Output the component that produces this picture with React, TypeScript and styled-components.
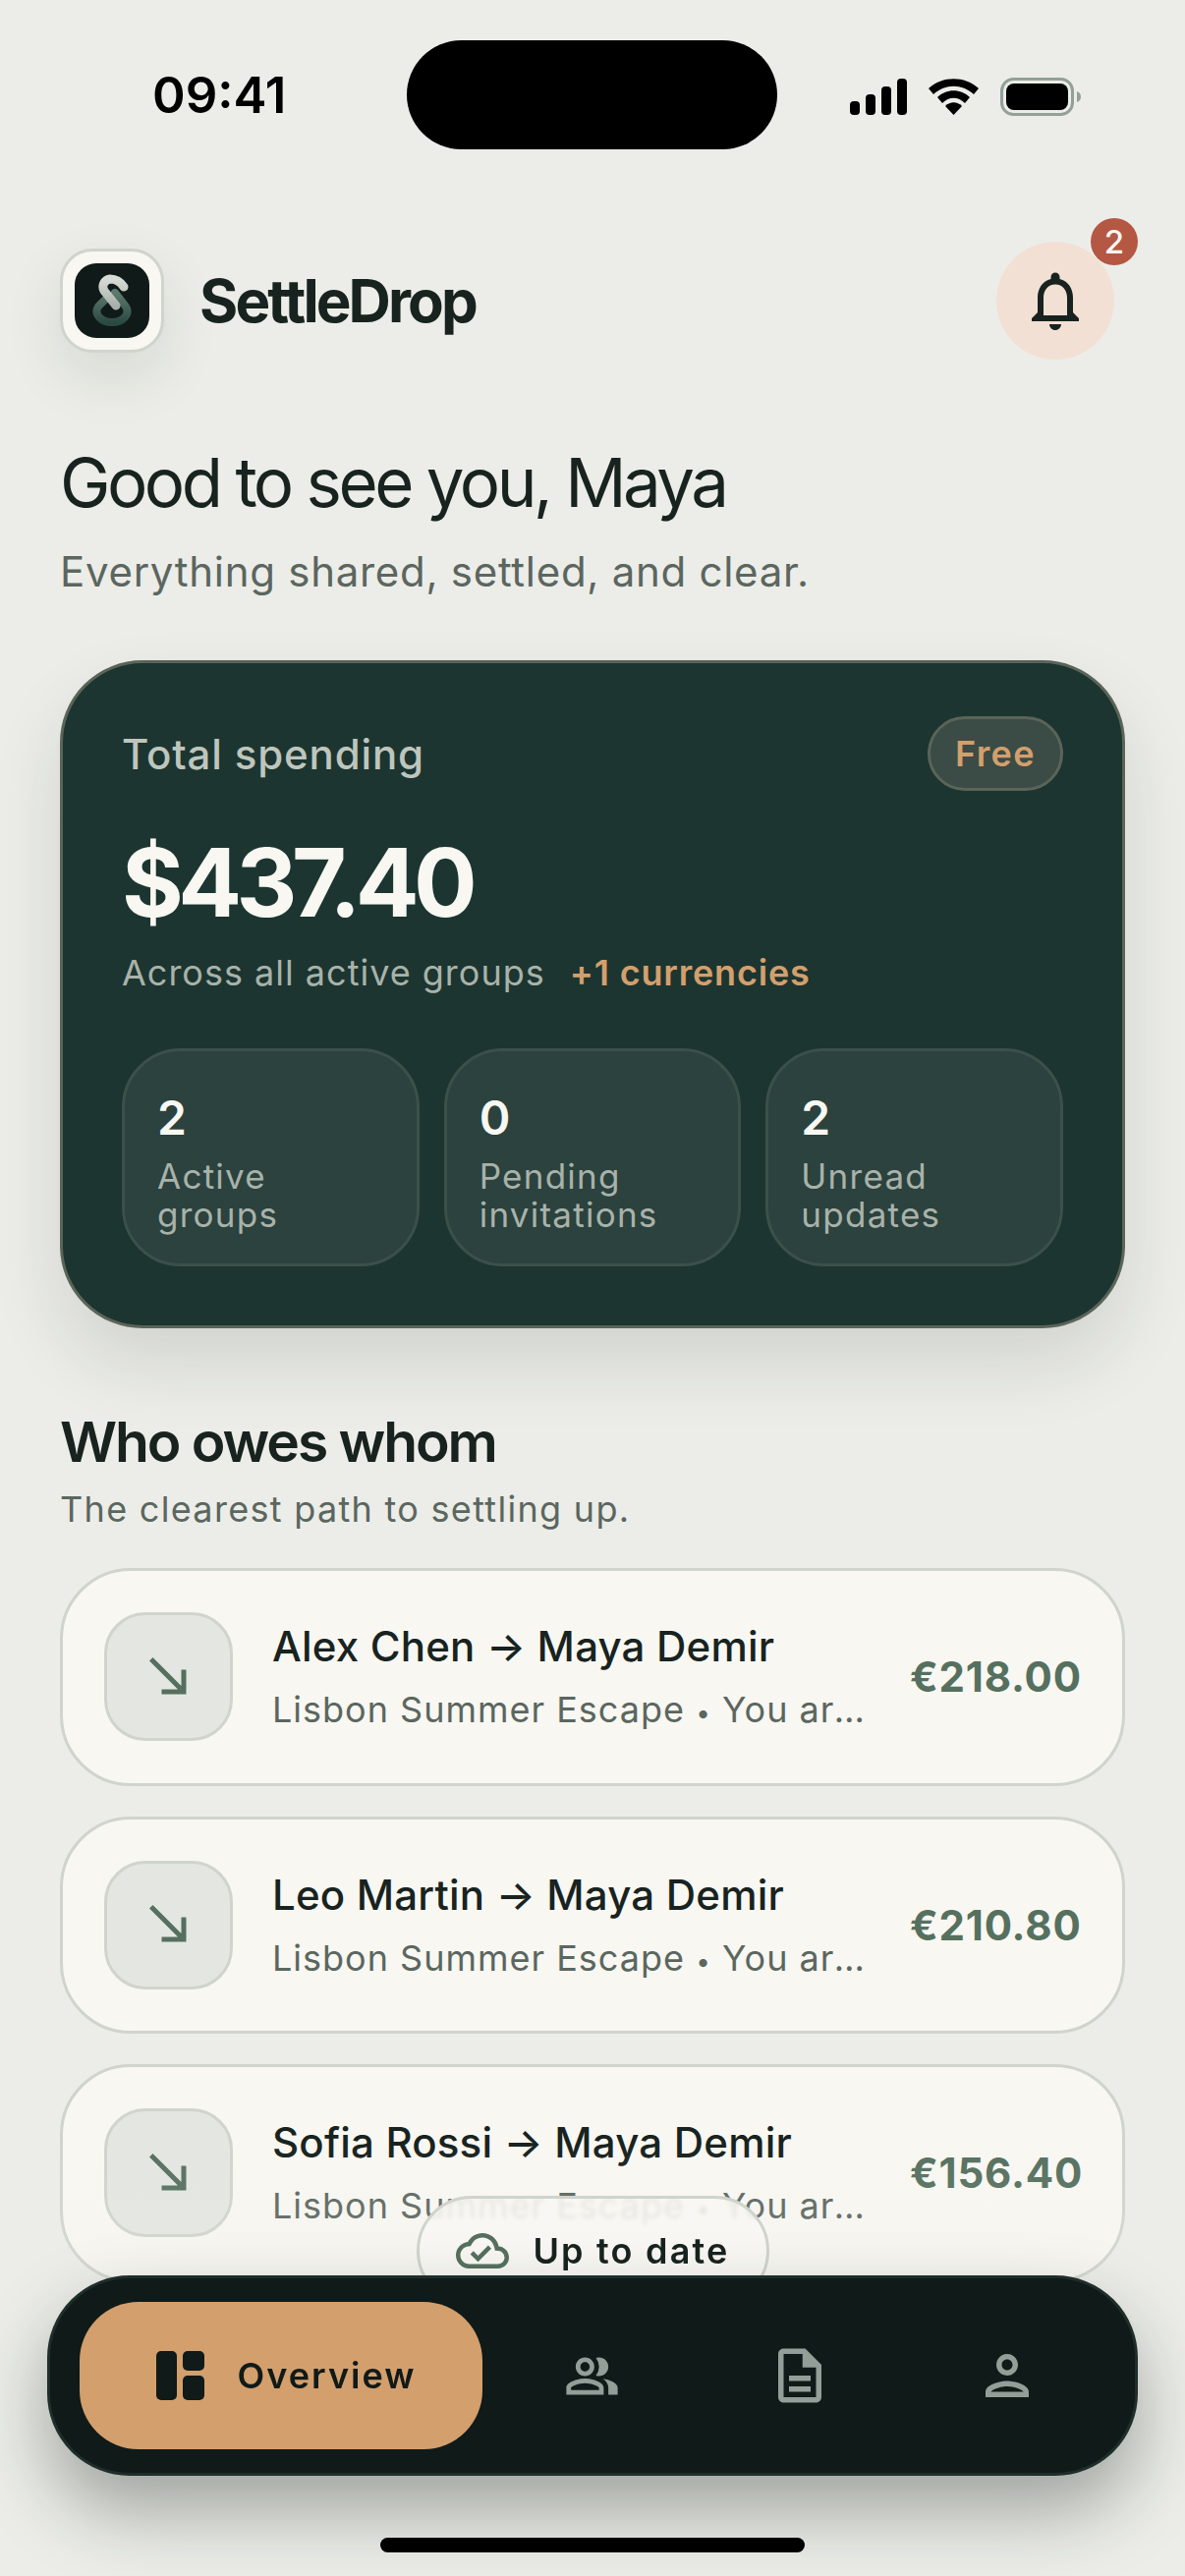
import React from 'react';
import styled, { createGlobalStyle } from 'styled-components';
import { MdOutlineNotifications, MdSouthEast, MdOutlineCloudDone, MdOutlinePeopleAlt, MdOutlineDescription, MdOutlinePerson } from 'react-icons/md';

const GlobalStyle = createGlobalStyle`
  html, body { margin: 0; padding: 0; background: #ecede8; }
  * { box-sizing: border-box; }
  body { font-family: Inter, "Liberation Sans", sans-serif; color: #18231f; }
`;

const Page = styled.div`
  position: relative;
  width: 1206px;
  height: 2622px;
  overflow: hidden;
  background: #ecede8;
`;

const StatusBar = styled.div`
  display: flex;
  align-items: flex-start;
  padding: 41px 106px 0 155px;
  height: 246px;
`;

const Time = styled.div`
  width: 259px;
  height: 111px;
  display: flex;
  align-items: center;
  font-size: 51px;
  font-weight: 600;
  color: #000;
`;

const Island = styled.div`
  width: 377px;
  height: 111px;
  border-radius: 56px;
  background: #000;
`;

const StatusIcons = styled.div`
  margin-left: auto;
  display: flex;
  align-items: center;
  gap: 22px;
  height: 40px;
  margin-top: 37px;
`;

const Header = styled.header`
  display: flex;
  align-items: center;
  height: 120px;
  padding: 0 72px 0 61px;
`;

const LogoBox = styled.div`
  width: 106px;
  height: 106px;
  border-radius: 33px;
  background: #f8f7f2;
  border: 3px solid #cfd4cc;
  display: flex;
  align-items: center;
  justify-content: center;
  box-shadow: 0 24px 60px rgba(24, 35, 31, 0.1);
`;

const Brand = styled.div`
  margin-left: 36px;
  font-size: 60px;
  font-weight: 700;
  letter-spacing: -2.9px;
  color: #18231f;
`;

const BellButton = styled.div`
  position: relative;
  margin-left: auto;
  width: 120px;
  height: 120px;
  border-radius: 50%;
  background: #f3e0d4;
  display: flex;
  align-items: center;
  justify-content: center;
  color: #18231f;
`;

const Badge = styled.div`
  position: absolute;
  top: -24px;
  right: -24px;
  width: 48px;
  height: 48px;
  border-radius: 50%;
  background: #b45743;
  color: #f8f7f2;
  font-size: 33px;
  font-weight: 500;
  display: flex;
  align-items: center;
  justify-content: center;
`;

const Main = styled.main`
  padding: 0 61px;
`;

const Greeting = styled.h1`
  margin: 83px 0 0;
  font-size: 69px;
  line-height: 84px;
  font-weight: 400;
  letter-spacing: -3.5px;
  color: #18231f;
`;

const Lead = styled.p`
  margin: 22px 0 0;
  font-size: 42px;
  line-height: 54px;
  font-weight: 400;
  letter-spacing: 0.72px;
  color: #5b665f;
`;

const SpendCard = styled.section`
  margin-top: 63px;
  height: 680px;
  border-radius: 84px;
  background: #1c3530;
  border: 3px solid #5a6458;
  padding: 54px 60px;
  box-shadow: 0 36px 72px rgba(24, 35, 31, 0.12);
`;

const CardTop = styled.div`
  display: flex;
  align-items: center;
  justify-content: space-between;
  height: 76px;
`;

const CardLabel = styled.div`
  font-size: 42px;
  font-weight: 500;
  letter-spacing: 0.85px;
  color: #bfc5bd;
`;

const PlanPill = styled.div`
  width: 138px;
  height: 76px;
  border-radius: 38px;
  background: #3a4c45;
  border: 3px solid #5a6458;
  display: flex;
  align-items: center;
  justify-content: center;
  font-size: 36px;
  font-weight: 600;
  letter-spacing: 1.4px;
  color: #d39f6d;
`;

const Total = styled.div`
  margin-top: 35px;
  font-size: 96px;
  line-height: 116px;
  font-weight: 700;
  letter-spacing: -5.6px;
  color: #f8f7f2;
`;

const CardNote = styled.div`
  margin-top: 10px;
  display: flex;
  gap: 25px;
  font-size: 36px;
  line-height: 48px;
  letter-spacing: 1px;
  color: #a9b2aa;
`;

const Accent = styled.span`
  font-weight: 600;
  letter-spacing: 0.8px;
  color: #d39f6d;
`;

const StatGrid = styled.div`
  margin-top: 53px;
  display: grid;
  grid-template-columns: repeat(3, 1fr);
  gap: 25px;
`;

const Stat = styled.div`
  height: 222px;
  border-radius: 60px;
  background: #2b423e;
  border: 3px solid #3c504a;
  padding: 38px 33px 0;
`;

const StatValue = styled.div`
  font-size: 48px;
  line-height: 60px;
  font-weight: 600;
  color: #f8f7f2;
`;

const StatLabel = styled.div`
  margin-top: 10px;
  font-size: 35px;
  line-height: 39px;
  letter-spacing: 1.25px;
  color: #a9b2aa;
`;

const SectionTitle = styled.h2`
  margin: 78px 0 0;
  font-size: 57px;
  line-height: 76px;
  font-weight: 600;
  letter-spacing: -2.1px;
  color: #18231f;
`;

const SectionNote = styled.p`
  margin: 8px 0 0;
  font-size: 36px;
  line-height: 44px;
  letter-spacing: 1.3px;
  color: #5b665f;
`;

const RowList = styled.div`
  margin-top: 38px;
  display: flex;
  flex-direction: column;
  gap: 31px;
`;

const Row = styled.div`
  display: flex;
  align-items: center;
  height: 221.5px;
  padding: 0 42px;
  border-radius: 72px;
  background: #f8f7f2;
  border: 3px solid #cfd4cc;
`;

const RowIcon = styled.div`
  flex: none;
  width: 131px;
  height: 131px;
  border-radius: 42px;
  background: #e4e7e1;
  border: 3px solid #cfd4cc;
  display: flex;
  align-items: center;
  justify-content: center;
  color: #56705f;
`;

const RowBody = styled.div`
  flex: 1;
  min-width: 0;
  margin: 0 44px 0 40px;
  padding-top: 3px;
`;

const RowTitle = styled.div`
  font-size: 42px;
  line-height: 56px;
  font-weight: 500;
  letter-spacing: 0.2px;
  color: #18231f;
`;

const RowMeta = styled.div`
  margin-top: 12px;
  font-size: 36px;
  line-height: 48px;
  letter-spacing: 1px;
  color: #5b665f;
  white-space: nowrap;
  overflow: hidden;
  text-overflow: ellipsis;
`;

const Dot = styled.span`
  font-size: 26px;
`;

const Amount = styled.div`
  flex: none;
  width: 174px;
  text-align: right;
  white-space: nowrap;
  font-size: 42px;
  font-weight: 700;
  letter-spacing: 0.8px;
  color: #56705f;
`;

const BottomFade = styled.div`
  position: absolute;
  left: 0;
  right: 0;
  top: 2180px;
  height: 160px;
  background: linear-gradient(rgba(236, 237, 232, 0), rgba(236, 237, 232, 0.2));
`;

const SyncPill = styled.div`
  position: absolute;
  top: 2235px;
  left: 424px;
  width: 359px;
  height: 112px;
  border-radius: 56px;
  border: 3px solid #cfd4cc;
  background: rgba(248, 247, 242, 0.88);
  backdrop-filter: blur(2px);
  display: flex;
  align-items: center;
  justify-content: center;
  gap: 24px;
  font-size: 36px;
  font-weight: 600;
  letter-spacing: 2.2px;
  color: #18231f;
`;

const SyncIcon = styled.span`
  display: flex;
  color: #56705f;
`;

const TabBar = styled.nav`
  position: absolute;
  left: 48px;
  top: 2316px;
  width: 1110px;
  height: 204px;
  border-radius: 84px;
  background: #101a18;
  border: 3px solid #1e2e2a;
  padding: 24px 30px;
  display: flex;
  align-items: center;
  box-shadow: 0 36px 72px rgba(24, 35, 31, 0.36);
`;

const ActiveTab = styled.div`
  flex: none;
  width: 410px;
  height: 150px;
  border-radius: 60px;
  padding-left: 10px;
  background: #d39f6d;
  display: flex;
  align-items: center;
  justify-content: center;
  gap: 33px;
  font-size: 36px;
  font-weight: 600;
  letter-spacing: 2px;
  color: #101a18;
`;

const Tab = styled.div`
  flex: 1;
  padding-left: 12px;
  display: flex;
  align-items: center;
  justify-content: center;
  color: #929e97;
`;

const HomeBar = styled.div`
  position: absolute;
  left: 387px;
  top: 2583px;
  width: 432px;
  height: 15px;
  border-radius: 8px;
  background: #000;
`;

const debts = [
  { from: 'Alex Chen', amount: '€218.00' },
  { from: 'Leo Martin', amount: '€210.80' },
  { from: 'Sofia Rossi', amount: '€156.40' },
];

const stats = [
  { value: '2', label: ['Active', 'groups'] },
  { value: '0', label: ['Pending', 'invitations'] },
  { value: '2', label: ['Unread', 'updates'] },
];

function SignalIcon() {
  return (
    <svg width="58" height="37" viewBox="0 0 58 37">
      <rect x="0" y="23" width="10" height="14" rx="4" fill="#000" />
      <rect x="16" y="16" width="10" height="21" rx="4" fill="#000" />
      <rect x="32" y="8" width="10" height="29" rx="4" fill="#000" />
      <rect x="48" y="0" width="10" height="37" rx="4" fill="#000" />
    </svg>
  );
}

function WifiIcon() {
  return (
    <svg width="51" height="37" viewBox="0 0 51 37">
      <path d="M0 10 C14 -3 37 -3 51 10 L46 16 C34 5 17 5 5 16Z" fill="#000" />
      <path d="M9 19 C18 10 33 10 42 19 L37 25 C30 18 21 18 14 25Z" fill="#000" />
      <path d="M17 28 C22 23 29 23 34 28 L25.5 37Z" fill="#000" />
    </svg>
  );
}

function BatteryIcon() {
  return (
    <svg width="82" height="39" viewBox="0 0 82 39">
      <rect x="1.5" y="1.5" width="72" height="36" rx="12" fill="none" stroke="#93a097" strokeWidth="3" />
      <rect x="6" y="6" width="63" height="27" rx="8" fill="#000" />
      <path d="M78 14 C81 15 82 17 82 19.5 C82 22 81 24 78 25Z" fill="#93a097" />
    </svg>
  );
}

function LogoMark() {
  return (
    <svg width="76" height="76" viewBox="0 0 76 76">
      <defs>
        <linearGradient id="linkTop" x1="0" y1="0" x2="0" y2="1">
          <stop offset="0" stopColor="#d8dcd6" />
          <stop offset="1" stopColor="#a9b0aa" />
        </linearGradient>
        <linearGradient id="linkBottom" x1="0" y1="0" x2="0" y2="1">
          <stop offset="0" stopColor="#5d7a70" />
          <stop offset="1" stopColor="#2b4a42" />
        </linearGradient>
      </defs>
      <rect width="76" height="76" rx="22" fill="#101a18" />
      <path d="M41 30 L52 44 C57 52 49 60 38 60 C27 60 19 52 24 44 L31 37" fill="none" stroke="url(#linkBottom)" strokeWidth="8" strokeLinecap="round" />
      <path d="M50 24 C46 18 41 16 36 16 C30 17 27 23 30 28 L42 43" fill="none" stroke="url(#linkTop)" strokeWidth="9" strokeLinecap="round" />
    </svg>
  );
}

function DashboardIcon() {
  return (
    <svg width="50" height="50" viewBox="0 0 50 50">
      <rect x="0" y="0" width="21" height="50" rx="5" fill="#101a18" />
      <rect x="27" y="0" width="22" height="20" rx="5" fill="#101a18" />
      <rect x="27" y="25" width="22" height="25" rx="5" fill="#101a18" />
    </svg>
  );
}

export default function App() {
  return (
    <Page>
      <GlobalStyle />
      <StatusBar>
        <Time>09:41</Time>
        <Island />
        <StatusIcons>
          <SignalIcon />
          <WifiIcon />
          <BatteryIcon />
        </StatusIcons>
      </StatusBar>

      <Header>
        <LogoBox>
          <LogoMark />
        </LogoBox>
        <Brand>SettleDrop</Brand>
        <BellButton>
          <MdOutlineNotifications size={72} />
          <Badge>2</Badge>
        </BellButton>
      </Header>

      <Main>
        <Greeting>Good to see you, Maya</Greeting>
        <Lead>Everything shared, settled, and clear.</Lead>

        <SpendCard>
          <CardTop>
            <CardLabel>Total spending</CardLabel>
            <PlanPill>Free</PlanPill>
          </CardTop>
          <Total>$437.40</Total>
          <CardNote>
            <span>Across all active groups</span>
            <Accent>+1 currencies</Accent>
          </CardNote>
          <StatGrid>
            {stats.map((stat) => (
              <Stat key={stat.label[0]}>
                <StatValue>{stat.value}</StatValue>
                <StatLabel>
                  {stat.label[0]}
                  <br />
                  {stat.label[1]}
                </StatLabel>
              </Stat>
            ))}
          </StatGrid>
        </SpendCard>

        <SectionTitle>Who owes whom</SectionTitle>
        <SectionNote>The clearest path to settling up.</SectionNote>

        <RowList>
          {debts.map((debt) => (
            <Row key={debt.from}>
              <RowIcon>
                <MdSouthEast size={60} />
              </RowIcon>
              <RowBody>
                <RowTitle>{debt.from} → Maya Demir</RowTitle>
                <RowMeta>Lisbon Summer Escape <Dot>•</Dot> You are owed</RowMeta>
              </RowBody>
              <Amount>{debt.amount}</Amount>
            </Row>
          ))}
        </RowList>
      </Main>

      <BottomFade />
      <SyncPill>
        <SyncIcon>
          <MdOutlineCloudDone size={54} />
        </SyncIcon>
        Up to date
      </SyncPill>

      <TabBar>
        <ActiveTab>
          <DashboardIcon />
          Overview
        </ActiveTab>
        <Tab>
          <MdOutlinePeopleAlt size={57} />
        </Tab>
        <Tab>
          <MdOutlineDescription size={66} />
        </Tab>
        <Tab>
          <MdOutlinePerson size={66} />
        </Tab>
      </TabBar>
      <HomeBar />
    </Page>
  );
}
